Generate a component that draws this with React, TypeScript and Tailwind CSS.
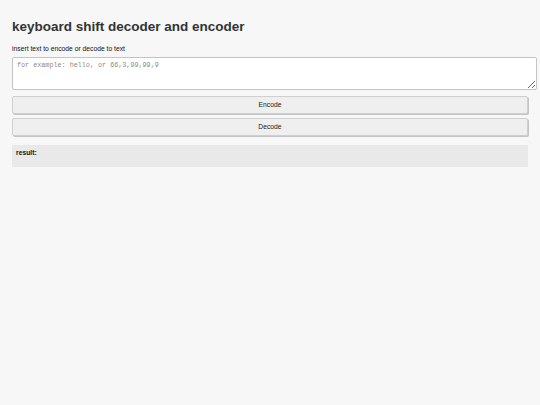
import React from "react";

export default function App() {
  return (
    <div className="min-h-screen w-full bg-[#f7f7f7] font-['Liberation_Sans',Arial,sans-serif] text-[#333]">
      <div className="flex w-[516px] flex-col pl-[12px] pt-[19px] box-content">
        <h1 className="text-[13.5px] font-bold leading-[16px] text-[#333]">
          keyboard shift decoder and encoder
        </h1>
        <label className="mt-[10px] text-[6.75px] leading-[8px] text-[#111]">
          insert text to encode or decode to text
        </label>
        <textarea
          className="mt-[4px] h-[33px] w-[525px] resize-y rounded-[2px] border border-[#c4c4c4] bg-white px-[4px] py-[3px] font-['Liberation_Mono','DejaVu_Sans_Mono',monospace] text-[6.75px] leading-[9px] text-[#333] placeholder:text-[#8a8a8a] outline-none"
          placeholder="for example: hello, or 66,3,99,99,9"
        />
        <button className="mt-[6px] h-[18px] w-full rounded-[2px] border border-[#cfcfcf] bg-[#efefef] text-[6.75px] leading-[8px] text-[#222] shadow-[1px_1px_0_#c4c4c4]">
          Encode
        </button>
        <button className="mt-[4px] h-[18px] w-full rounded-[2px] border border-[#cfcfcf] bg-[#efefef] text-[6.75px] leading-[8px] text-[#222] shadow-[1px_1px_0_#c4c4c4]">
          Decode
        </button>
        <div className="mt-[9px] h-[22px] w-full bg-[#e9e9e9] px-[4px] pt-[4px] text-[6.75px] font-bold leading-[8px] text-[#111]">
          result:
        </div>
      </div>
    </div>
  );
}
